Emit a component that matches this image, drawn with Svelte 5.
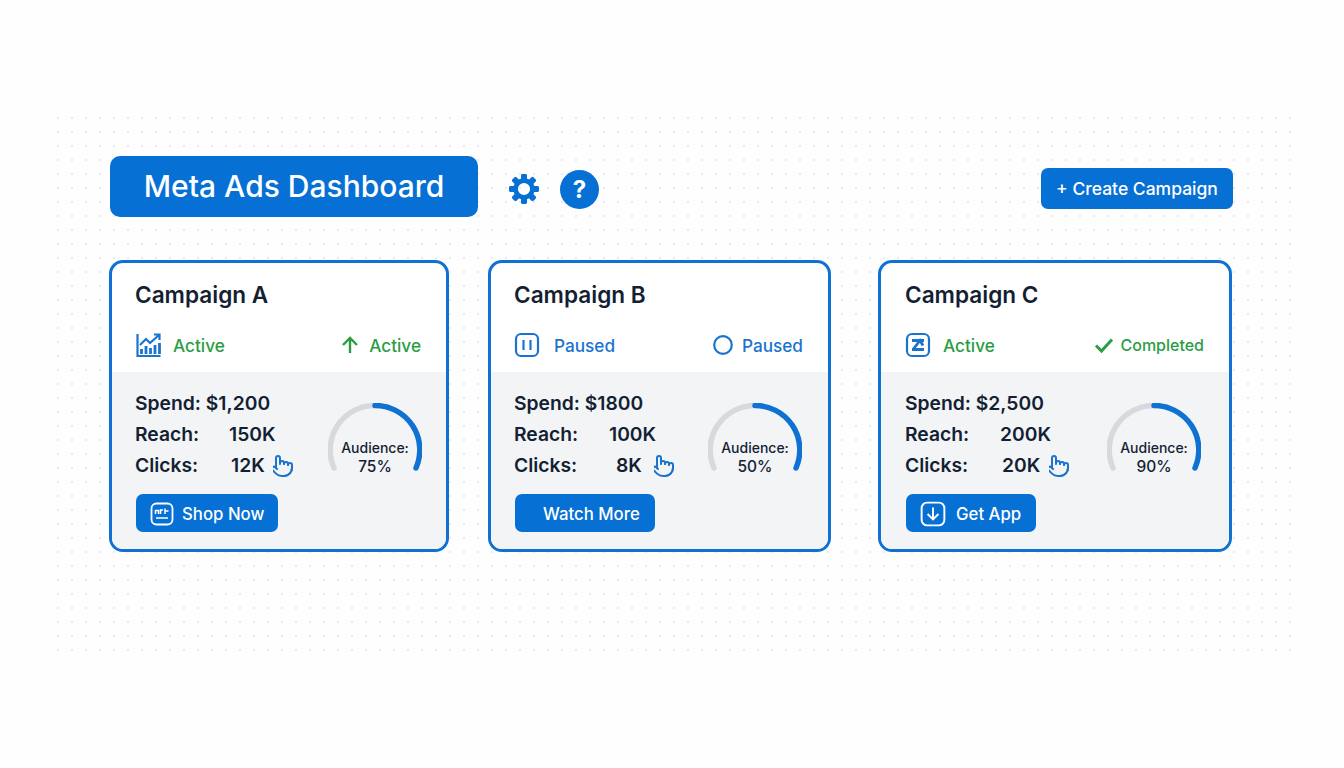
<script>
	const campaigns = [
		{
			name: 'Campaign A',
			width: 340,
			gap: 0,
			kind: 'chart',
			left: 'Active',
			leftTone: 'green',
			right: 'Active',
			rightTone: 'green',
			rightIcon: 'up',
			spend: '$1,200',
			reach: '150K',
			clicks: '12K',
			reachLabel: 94,
			clicksLabel: 96,
			handGap: 3,
			gaugeRight: 24,
			audience: '75%',
			cta: 'Shop Now',
			ctaIcon: 'shop',
			ctaWidth: 142
		},
		{
			name: 'Campaign B',
			width: 343,
			gap: 39,
			kind: 'pause',
			left: 'Paused',
			leftTone: 'blue',
			right: 'Paused',
			rightTone: 'blue',
			rightIcon: 'circle',
			spend: '$1800',
			reach: '100K',
			clicks: '8K',
			reachLabel: 95,
			clicksLabel: 102,
			handGap: 7,
			gaugeRight: 26,
			audience: '50%',
			cta: 'Watch More',
			ctaIcon: 'none',
			ctaWidth: 140
		},
		{
			name: 'Campaign C',
			width: 354,
			gap: 47,
			kind: 'square',
			left: 'Active',
			leftTone: 'green',
			right: 'Completed',
			rightTone: 'green',
			rightIcon: 'check',
			spend: '$2,500',
			reach: '200K',
			clicks: '20K',
			reachLabel: 95,
			clicksLabel: 97,
			handGap: 4,
			gaugeRight: 28,
			audience: '90%',
			cta: 'Get App',
			ctaIcon: 'download',
			ctaWidth: 130
		}
	];

	const teeth = [0, 45, 90, 135, 180, 225, 270, 315];
</script>

<div class="page">
	<header>
		<h1>Meta Ads Dashboard</h1>
		<svg class="gear" viewBox="0 0 32 32" aria-hidden="true">
			{#each teeth as t}
				<rect x="13" y="1" width="6" height="7" rx="1.4" transform="rotate({t} 16 16)" />
			{/each}
			<circle class="ring" cx="16" cy="16" r="8.4" />
		</svg>
		<div class="help">?</div>
		<button class="create">+ Create Campaign</button>
	</header>

	<section class="cards">
		{#each campaigns as c}
			<article class="card" style="width: {c.width}px; margin-left: {c.gap}px">
				<div class="top">
					<h2>{c.name}</h2>
					<div class="status">
						<span class="badge {c.leftTone}">
							{#if c.kind === 'chart'}
								<svg class="kind" viewBox="0 0 26 26" aria-hidden="true">
									<path d="M2.5 2v22h23" />
									<path class="thick" d="M6.5 22v-5M11 22v-8M15.5 22v-6M20 22v-9M24.5 22v-11" />
									<path d="M5 13l6-6 4 4 9-8M19 2.5h5.5V8" />
								</svg>
							{:else if c.kind === 'pause'}
								<svg class="kind pause" viewBox="0 0 26 26" aria-hidden="true">
									<rect x="2" y="2" width="22" height="22" rx="5" />
									<path d="M9.5 8v10M16.5 8v10" />
								</svg>
							{:else}
								<svg class="kind" viewBox="0 0 26 26" aria-hidden="true">
									<rect x="2" y="2" width="22" height="22" rx="5" />
									<path class="thick" d="M7 8.5h12M7 17.5h12M8 17.5l7-9 3 5" />
								</svg>
							{/if}
							{c.left}
						</span>
						<span class="badge {c.rightTone} {c.rightIcon === 'check' ? 'small' : ''}">
							{#if c.rightIcon === 'up'}
								<svg class="state" viewBox="0 0 20 20" aria-hidden="true">
									<path d="M10 18V3M3 10l7-7 7 7" />
								</svg>
							{:else if c.rightIcon === 'circle'}
								<svg class="state round" viewBox="0 0 20 20" aria-hidden="true">
									<circle cx="10" cy="10" r="8.8" />
								</svg>
							{:else}
								<svg class="state tick" viewBox="0 0 20 20" aria-hidden="true">
									<path d="M2 10.5l5.5 5.5L18 4.5" />
								</svg>
							{/if}
							{c.right}
						</span>
					</div>
				</div>

				<div class="bottom">
					<div class="stats">
						<div class="row">Spend: {c.spend}</div>
						<div class="row">
							<span style="width: {c.reachLabel}px">Reach:</span>{c.reach}
						</div>
						<div class="row">
							<span style="width: {c.clicksLabel}px">Clicks:</span>{c.clicks}
							<svg class="hand" style="margin-left: {c.handGap}px" viewBox="3 0 20 24" aria-hidden="true">
								<path d="M22 14a8 8 0 0 1-8 8" />
								<path d="M18 11v-1a2 2 0 0 0-2-2a2 2 0 0 0-2 2" />
								<path d="M14 10V9a2 2 0 0 0-2-2a2 2 0 0 0-2 2v1" />
								<path d="M10 9.5V4a2 2 0 0 0-2-2a2 2 0 0 0-2 2v10" />
								<path d="M18 11a2 2 0 1 1 4 0v3a8 8 0 0 1-8 8h-2c-2.8 0-4.5-.86-5.99-2.34l-3.6-3.6a2 2 0 0 1 2.83-2.82L7 15" />
							</svg>
						</div>
						<button class="cta {c.ctaIcon}" style="width: {c.ctaWidth}px">
							{#if c.ctaIcon === 'shop'}
								<svg class="cta-icon" viewBox="0 0 24 24" aria-hidden="true">
									<rect x="1.5" y="1.5" width="21" height="21" rx="5" />
									<path class="fine" d="M5.5 12V8.5h3V12M10.5 12V8h2.5M15 6.5V12M15 9h3.5M6 16h12" />
								</svg>
							{:else if c.ctaIcon === 'download'}
								<svg class="cta-icon" viewBox="0 0 24 24" aria-hidden="true">
									<rect x="1.5" y="1.5" width="21" height="21" rx="5" />
									<path d="M12 6v11M7 12l5 5 5-5" />
								</svg>
							{/if}
							{c.cta}
						</button>
					</div>
					<div class="gauge" style="margin-right: {c.gaugeRight}px">
						<svg viewBox="0 0 94 70" aria-hidden="true">
							<path class="track" d="M6 65A44.5 44.5 0 0 1 47 2.5" />
							<path class="value" d="M47 2.5A44.5 44.5 0 0 1 88 65" />
						</svg>
						<div class="gauge-label">Audience:</div>
						<div class="gauge-value">{c.audience}</div>
					</div>
				</div>
			</article>
		{/each}
	</section>
</div>

<style>
	:global(body) {
		margin: 0;
		background: #fff;
	}

	.page {
		position: relative;
		box-sizing: border-box;
		width: 1344px;
		height: 768px;
		padding: 156px 111px 0 109px;
		overflow: hidden;
		font-family: Inter, 'Liberation Sans', sans-serif;
		color: #141f33;
		background: #fefeff;
	}

	/* faint dot grid behind everything */
	.page::before {
		content: '';
		position: absolute;
		left: 52px;
		top: 112px;
		width: 1242px;
		height: 540px;
		background-image: radial-gradient(circle at 6px 6px, #e8ecf1 1px, transparent 1.6px);
		background-size: 14px 14px;
	}

	header {
		position: relative;
		display: flex;
		align-items: center;
		margin-bottom: 43px;
		padding-left: 1px;
	}

	h1 {
		box-sizing: border-box;
		width: 368px;
		height: 61px;
		margin: 0 30px 0 0;
		border-radius: 10px;
		background: #0670d5;
		color: #fff;
		font-size: 30px;
		font-weight: 500;
		line-height: 60px;
		text-align: center;
	}

	.gear {
		width: 32px;
		height: 32px;
		margin: 5px 20px 0 0;
		fill: #0670d5;
	}

	.gear .ring {
		fill: none;
		stroke: #0670d5;
		stroke-width: 4.6;
	}

	.help {
		width: 39px;
		height: 39px;
		margin-top: 5px;
		border-radius: 50%;
		background: #0670d5;
		color: #fff;
		font-size: 24px;
		font-weight: 700;
		line-height: 39px;
		text-align: center;
	}

	.create {
		width: 192px;
		height: 41px;
		margin: 4px 0 0 auto;
		padding: 0;
		border: 0;
		border-radius: 7px;
		background: #0670d5;
		color: #fff;
		font: 500 17.5px Inter, 'Liberation Sans', sans-serif;
	}

	.cards {
		position: relative;
		display: flex;
	}

	.card {
		box-sizing: border-box;
		height: 292px;
		border: 3px solid #0f72d2;
		border-radius: 14px;
		overflow: hidden;
		background: #fff;
	}

	.top {
		box-sizing: border-box;
		height: 109px;
		padding: 18px 25px 0 23px;
	}

	h2 {
		margin: 0 0 23px;
		font-size: 22.6px;
		font-weight: 600;
		line-height: 28px;
	}

	.status {
		display: flex;
		justify-content: space-between;
		align-items: center;
		height: 26px;
	}

	.badge {
		display: flex;
		align-items: center;
		font-size: 17.2px;
		font-weight: 550;
	}

	.badge.small {
		font-size: 16px;
	}

	.green {
		color: #2a9d44;
	}

	.blue {
		color: #1a74cf;
	}

	.kind {
		width: 26px;
		height: 26px;
		margin-right: 12px;
		fill: none;
		stroke: #1a74cf;
		stroke-width: 2.2;
	}

	.kind.pause {
		margin-right: 14px;
	}

	.kind .thick {
		stroke-width: 2.8;
	}

	.state {
		width: 20px;
		height: 20px;
		margin-right: 9px;
		fill: none;
		stroke: currentColor;
		stroke-width: 2.4;
	}

	.state.tick {
		margin-right: 6px;
		stroke-width: 3;
	}

	.state.round {
		stroke-width: 2.2;
	}

	.bottom {
		display: flex;
		height: 180px;
		padding: 0 0 0 23px;
		background: #f2f4f6;
	}

	/* third card sits a pixel further in */
	.card:last-child .top,
	.card:last-child .bottom {
		padding-left: 24px;
	}

	.stats {
		flex: 1;
		padding-top: 15px;
	}

	.row {
		display: flex;
		align-items: center;
		height: 31px;
		font-size: 19.3px;
		font-weight: 570;
		white-space: pre;
	}

	.hand {
		width: 20px;
		height: 24px;
		margin-top: 2px;
		fill: none;
		stroke: #1a74cf;
		stroke-width: 2;
		stroke-linecap: round;
		stroke-linejoin: round;
	}

	.cta {
		display: flex;
		align-items: center;
		box-sizing: border-box;
		height: 38px;
		margin: 14px 0 0 1px;
		padding: 1px 0 0 14px;
		border: 0;
		border-radius: 7px;
		background: #0670d5;
		color: #fff;
		font: 500 16.8px Inter, 'Liberation Sans', sans-serif;
	}

	.cta.none {
		padding-left: 28px;
	}

	.cta-icon {
		width: 24px;
		height: 24px;
		margin-right: 8px;
		fill: none;
		stroke: #fff;
		stroke-width: 1.8;
	}

	.cta.download .cta-icon {
		width: 26px;
		height: 26px;
		margin-right: 10px;
	}

	.cta-icon .fine {
		stroke-width: 1.5;
	}

	.gauge {
		position: relative;
		flex: none;
		width: 94px;
		height: 70px;
		margin-top: 31px;
		text-align: center;
	}

	.gauge svg {
		position: absolute;
		left: 0;
		top: 0;
		width: 94px;
		height: 70px;
		fill: none;
		stroke-width: 5.5;
		stroke-linecap: round;
	}

	.gauge .track {
		stroke: #d6d9dd;
	}

	.gauge .value {
		stroke: #0f72d2;
	}

	.gauge-label {
		position: relative;
		margin: 35px -10px 0;
		font-size: 14px;
		font-weight: 500;
		line-height: 20px;
	}

	.gauge-value {
		position: relative;
		font-size: 15.5px;
		font-weight: 500;
		line-height: 18px;
	}
</style>
